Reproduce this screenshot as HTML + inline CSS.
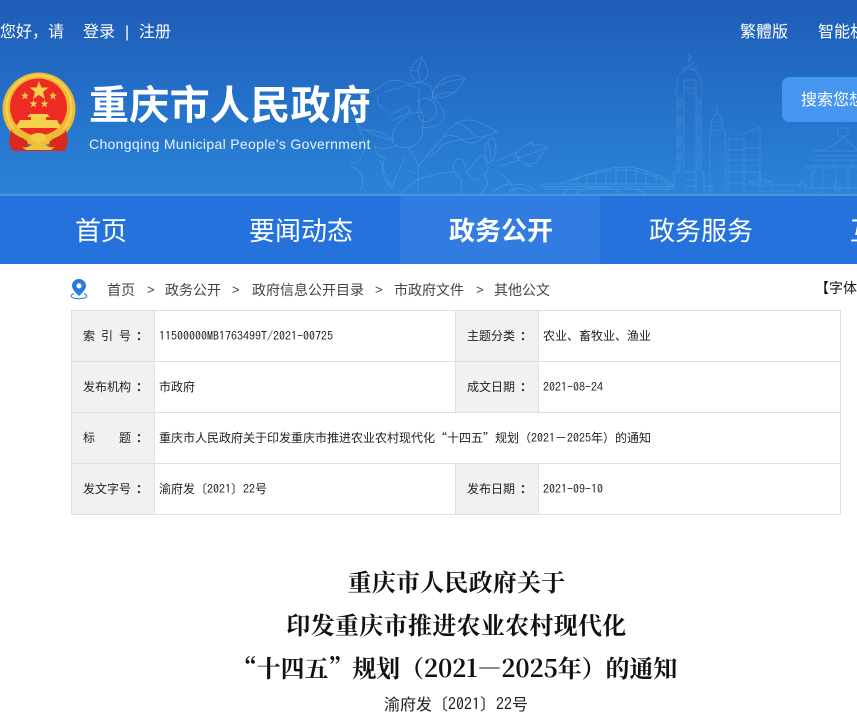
<!DOCTYPE html>
<html lang="zh-CN">
<head>
<meta charset="utf-8">
<title>重庆市人民政府</title>
<style>
html,body{margin:0;padding:0;width:857px;height:721px;overflow:hidden;background:#fff;font-family:"Liberation Sans","Noto Sans CJK SC",sans-serif;}
.a{position:absolute;white-space:nowrap;line-height:1;}
#hd{position:absolute;left:0;top:0;width:857px;height:196px;background:linear-gradient(#1e5cb7,#2a84d9);overflow:hidden;}
#hl{position:absolute;left:0;top:194px;width:857px;height:2px;background:#4a97e0;}
#nav{position:absolute;left:0;top:196px;width:857px;height:68px;background:#2672dc;overflow:hidden;}
#act{position:absolute;left:400px;top:0;width:200px;height:68px;background:#307ce0;}
.n{position:absolute;top:0;height:70px;line-height:70px;font-size:26px;color:#fff;width:200px;text-align:center;white-space:nowrap;}
.t{color:#fff;font-size:16px;}
.bc{color:#444;font-size:14px;top:283px;}
.gt{color:#444;font-size:13px;top:283px;font-family:"Liberation Sans",sans-serif;}
#tb{position:absolute;left:71px;top:310px;width:770px;height:205px;border-collapse:collapse;table-layout:fixed;font-family:"Noto Sans CJK SC",sans-serif;font-size:12px;color:#222;}
#tb td{border:1px solid #e0e0e0;height:51px;padding:0 0 2px 4px;white-space:nowrap;overflow:hidden;box-sizing:border-box;}
#tb td.l{background:#f1f1f1;padding-left:11px;}
#tb i{font-style:normal;font-family:"IPAGothic",monospace;font-size:12px;}
#tb b{font-weight:700;font-family:"Noto Sans CJK TC",sans-serif;font-size:12px;margin-left:5px;}
#tb u{text-decoration:none;display:inline-block;width:18px;}
.ttl{position:absolute;left:0;width:913px;text-align:center;font-family:"Noto Serif CJK SC",serif;font-weight:700;font-size:24px;line-height:1;color:#111;white-space:nowrap;}
</style>
</head>
<body>
<div id="hd">
<svg width="857" height="196" style="position:absolute;left:0;top:0" fill="none" stroke="#9cc8f0" stroke-opacity=".28" stroke-width=".8">
<path d="M418 82C412 78 409 74 411 69C412 64 418 60 422 57C423 62 429 68 428 74C427 79 423 82 418 82ZM422 58L418 70L420 81M411 71L418 70"/>
<path d="M432 98C433 90 438 82 444 79C452 74 460 74 465 79C461 84 458 91 450 95C444 98 438 98 432 98ZM436 88C444 82 452 80 464 79M434 97C441 92 450 92 455 93"/>
<path d="M385 83C392 79 402 80 409 84C416 82 424 82 430 86C433 90 433 95 432 98C438 101 445 110 444 118C442 124 436 127 430 127L422 128C424 134 421 142 413 146C407 148 401 148 397 146C392 143 392 141 393 140C384 139 376 136 365 130C358 127 355 122 355 116C355 108 360 100 367 94C372 91 378 90 385 83Z"/>
<path d="M378 95C376 103 380 108 386 110M393 140C392 132 394 124 407 116C414 112 418 112 422 113C418 106 417 96 420 90C413 84 405 84 402 88C396 88 390 90 385 92M420 100C426 96 433 100 436 106C438 114 432 122 424 122C418 120 416 112 420 100ZM390 115L407 106M391 121L410 112L408 106M422 113C424 118 424 124 422 128M365 130C374 130 386 133 393 140"/>
<path d="M397 146C388 149 378 150 375 146C375 152 380 158 386 158C382 163 381 172 385 180C388 185 391 188 392 188C395 178 400 168 405 158M380 160C384 170 388 180 391 187"/>
<path d="M408 147C414 155 417 162 418 167V193M406 170L416 173M418 167C424 158 436 146 443 137C449 128 458 120 467 120C477 120 488 126 497 132C490 135 484 137 480 137C470 138 460 140 450 142C445 143 440 147 436 152L428 158M455 122C462 124 470 130 478 138M443 137C450 134 458 136 466 142C474 145 482 140 486 135"/>
<path d="M400 195C408 185 418 178 430 176C440 173 448 172 454 172"/>
<path d="M453 167C454 160 458 158 460 159C464 160 466 166 467 172C470 168 476 162 480 155C484 154 486 158 486 164M488 163C484 155 484 146 487 142L493 137C496 144 497 150 495 156C494 160 492 162 488 163ZM488 141L491 160"/>
<path d="M453 167C455 174 458 178 462 180C460 185 461 190 462 195M486 164C490 168 488 172 484 174C488 180 490 188 478 195M467 172C470 178 474 180 480 180M497 172C506 176 512 184 516 195M495 162L517 152M497 167L519 160"/>
<path d="M517 152C520 148 526 146 532 142L533 146C538 144 544 145 548 147C543 151 540 158 536 162C532 165 525 165 519 160C516 158 515 155 517 152ZM517 158C526 156 535 152 546 148M525 165L532 167"/>
<path d="M493 192C500 186 508 182 516 185C522 183 530 186 534 190M504 195C512 188 522 186 530 192"/>
<path d="M355 122C360 128 366 140 364 150C362 160 356 165 350 162M350 166C362 170 366 182 360 190"/>
<path d="M542 184H673V186.500H542ZM544 189H671M572 181C590 172 610 167 625 167C640 167 660 175 672 183M562 183C590 172 610 170 625 170C640 170 655 176 668 183M578 177V184M587 174V184M596 172V184M606 170V184M616 168V184M626 167V184M636 168V184M646 170V184M656 174V184M562 196C565 190 570 188 572 188M625 188C635 188 642 191 647 196M572 196C590 182 615 186 625 196"/>
</svg>
<svg width="857" height="196" style="position:absolute;left:0;top:0" fill="none" stroke="#9cc8f0" stroke-opacity=".22" stroke-width=".8">
<path d="M689 53V68M689 55L693 58L688 60L694 63L689 66M683 69C685 65 695 65 697 69ZM677 82C678 73 684 69 689 69C695 69 700 73 701 82V87C703 90 703 92 701 95V172M677 82V87C675 90 675 92 677 95V172M684 80H696V112M684 80V112M684 88H696M688 88V94H694V88M684 112V172M696 112V172M680 96V172M698 96V172M678 100V108L682 105V99ZM698 100L701 104V110L698 106ZM678 118V126L682 122V116ZM698 118L701 122V127L698 124ZM678 138V146L682 142V136ZM698 136L701 140V146L698 142ZM678 154V160L682 158V152ZM698 154L701 158V162L698 160ZM674 195V172H679V166M704 195V172H701V166M684 172H696V195M684 180H696M684 186H696M668 195V186H674M712 195V186H704"/>
<path d="M717 106V114M711 130C711 118 714 114 717 114C720 114 723 118 723 130ZM711 122H723M711 126H723M710 130H725V195H710ZM713 135H715M719 135H721M713 146H715M719 146H721M713 157H715M719 157H721M713 170H715M719 170H721M713 182H715M719 182H721"/>
<path d="M728 139H744V195H728ZM728 150H744M728 160H744M728 172H744M728 183H744M742 135L760 127V195H744M744 148H760M744 160H760M744 172H760M744 184H760"/>
<path d="M748 182H772V195M748 182L760 178L772 182M760 178V173M755 186H765M762 185H800M760 191H795M798 186H806V195M798 186L802 180L806 186"/>
<path d="M838 128H848V136H838ZM843 136C838 145 825 150 813 151M843 136C850 145 857 148 857 150M813 151H857M811 160H857M816 156H857M806 166H857M804 168H857M810 178L816 170M812 170V188M823 170V188M836 170V188M848 170V188M816 162V166M834 162V166M852 162V166M808 188H857M835 182V190H840V182ZM818 192H824V196M836 192H840V196M844 192H850V196"/>
</svg>
<div id="hl"></div>

<div class="a t" style="left:0;top:25px;">您好，请</div>
<div class="a t" style="left:83px;top:25px;">登录</div>
<div class="a t" style="left:125px;top:25px;">|</div>
<div class="a t" style="left:139px;top:25px;">注册</div>
<div class="a t" style="left:740px;top:25px;">繁體版</div>
<div class="a t" style="left:818px;top:25px;">智能机器人</div>
<div style="position:absolute;left:782px;top:77px;width:90px;height:45px;border-radius:7px;background:#4596f0;"></div>
<div class="a t" style="left:801px;top:93px;font-size:16px;">搜索您想要的</div>

<svg width="80" height="85" viewBox="0 0 80 85" style="position:absolute;left:0;top:70px">
<circle cx="39" cy="39" r="36.500" fill="#eebb35"/>
<circle cx="39" cy="38" r="32.500" fill="none" stroke="#f7d354" stroke-width="2"/>
<circle cx="38.500" cy="37" r="28.500" fill="#ee2a24"/>
<g fill="#f6d24a">
<polygon points="39,11 41.400,17.500 48.500,17.500 43,22 45,29 39,25 33,29 35,22 29.500,17.500 36.600,17.500"/>
<polygon points="25,21.500 26,24.500 29,24.500 26.600,26.400 27.500,29.500 25,27.600 22.500,29.500 23.400,26.400 21,24.500 24,24.500"/>
<polygon points="53,21.500 54,24.500 57,24.500 54.600,26.400 55.500,29.500 53,27.600 50.500,29.500 51.400,26.400 49,24.500 52,24.500"/>
<polygon points="33.500,29.500 34.500,32.500 37.500,32.500 35.100,34.400 36,37.500 33.500,35.600 31,37.500 31.900,34.400 29.500,32.500 32.500,32.500"/>
<polygon points="44.500,29.500 45.500,32.500 48.500,32.500 46.100,34.400 47,37.500 44.500,35.600 42,37.500 42.900,34.400 40.500,32.500 43.500,32.500"/>
<path d="M30 44H47L50 47H27ZM31 47H46V50H31ZM20 50H57L59 54H18ZM17 54H60V58H17Z"/>
</g>
<path d="M11 60L27 71L30 81L12 81L9 72ZM66 60L50 71L47 81L65 81L68 72Z" fill="#d92a1f"/>
<path d="M27 81H50L48 76H29Z" fill="#d92a1f"/>
<path d="M13 60C21 67 30 69 38.500 69C47 69 56 67 64 60" fill="none" stroke="#eebb35" stroke-width="4"/>
<path d="M30 66C34 62 43 62 47 66L44 71H33Z" fill="#f3cb47"/>
<path d="M22 77C28 79 33 73 38.500 71C44 73 49 79 55 77L51 80H26Z" fill="#f0c13a"/>
</svg>

<div class="a" style="left:89px;top:86px;font-size:40px;font-weight:700;color:#fff;letter-spacing:.3px;">重庆市人民政府</div>
<div class="a" style="left:89px;top:136.500px;font-size:14px;color:#e9f2fb;letter-spacing:.33px;">Chongqing Municipal People's Government</div>
</div>

<div id="nav">
<div id="act"></div>
<div class="n" style="left:1px;">首页</div>
<div class="n" style="left:201px;">要闻动态</div>
<div class="n" style="left:401px;font-weight:700;">政务公开</div>
<div class="n" style="left:601px;">政务服务</div>
<div class="a" style="left:850px;top:22px;font-size:26px;color:#fff;">互动交流</div>
</div>

<svg width="20" height="22" viewBox="0 0 20 22" style="position:absolute;left:70px;top:278px">
<path d="M9 1C4.800 1 2 4.200 2 7.700C2 11.600 6.500 15.600 9 18C11.500 15.600 16 11.600 16 7.700C16 4.200 13.200 1 9 1ZM9 5.200A2.600 2.600 0 1 1 9 10.400A2.600 2.600 0 1 1 9 5.200Z" fill="#2a7ae0" fill-rule="evenodd"/>
<path d="M4 15.500C2 16.200 1.200 17 1.200 18C1.200 19.600 4.600 20.700 9 20.700C13.400 20.700 16.800 19.600 16.800 18C16.800 17 16 16.200 14 15.500" fill="none" stroke="#2a7ae0" stroke-width="1"/>
</svg>

<div class="a bc" style="left:107px;">首页</div>
<div class="a gt" style="left:147px;">&gt;</div>
<div class="a bc" style="left:165px;">政务公开</div>
<div class="a gt" style="left:232px;">&gt;</div>
<div class="a bc" style="left:252px;">政府信息公开目录</div>
<div class="a gt" style="left:375px;">&gt;</div>
<div class="a bc" style="left:394px;">市政府文件</div>
<div class="a gt" style="left:476px;">&gt;</div>
<div class="a bc" style="left:494px;">其他公文</div>
<div class="a" style="left:815px;top:281px;font-size:14px;color:#111;">【字体：</div>

<table id="tb" cellspacing="0">
<colgroup><col style="width:83px"><col style="width:301px"><col style="width:83px"><col style="width:302px"></colgroup>
<tr><td class="l">索<span style="margin-left:6px">引</span><span style="margin-left:6px">号</span><b>：</b></td><td><i>11500000MB1763499T/2021-00725</i></td><td class="l">主题分类<b>：</b></td><td>农业、畜牧业、渔业</td></tr>
<tr><td class="l">发布机构<b>：</b></td><td>市政府</td><td class="l">成文日期<b>：</b></td><td><i>2021-08-24</i></td></tr>
<tr><td class="l">标<u style="width:24px"></u>题<b>：</b></td><td colspan="3">重庆市人民政府关于印发重庆市推进农业农村现代化“十四五”规划（<i>2021</i>－<i>2025</i>年）的通知</td></tr>
<tr><td class="l">发文字号<b>：</b></td><td>渝府发〔<i>2021</i>〕<i>22</i>号</td><td class="l">发布日期<b>：</b></td><td><i>2021-09-10</i></td></tr>
</table>

<div class="ttl" style="top:569px;letter-spacing:.2px;">重庆市人民政府关于</div>
<div class="ttl" style="top:612px;letter-spacing:.3px;">印发重庆市推进农业农村现代化</div>
<div class="ttl" style="top:655px;width:910px;letter-spacing:-.12px;">“十四五”规划（2021—2025年）的通知</div>
<div class="a" style="left:384px;top:695px;font-size:16px;color:#222;font-family:'Noto Sans CJK SC',sans-serif;">渝府发〔<span style="font-family:'IPAGothic',monospace;">2021</span>〕<span style="font-family:'IPAGothic',monospace;">22</span>号</div>
</body>
</html>
